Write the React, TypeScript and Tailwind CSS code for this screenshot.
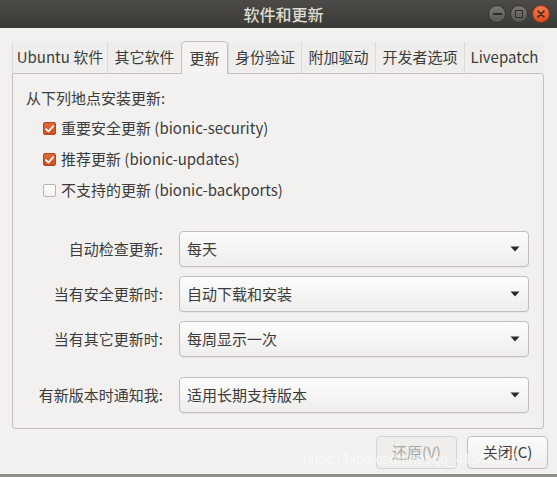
import React from "react";

const FONT = { fontFamily: '"Noto Sans CJK SC", "Noto Sans", sans-serif' };

function Check({ checked }: { checked: boolean }) {
  if (checked) {
    return (
      <span className="w-[13px] h-[13px] rounded-[2px] border border-[#b0481e] bg-gradient-to-b from-[#e4693a] to-[#cf4f21] flex items-center justify-center shrink-0">
        <svg width="9" height="8" viewBox="0 0 9 8">
          <path d="M1 4.2 L3.5 6.5 L8 1.3" stroke="#ffffff" strokeWidth="1.8" fill="none" strokeLinecap="round" strokeLinejoin="round" />
        </svg>
      </span>
    );
  }
  return <span className="w-[13px] h-[13px] rounded-[2px] border border-[#b8b5b0] bg-gradient-to-b from-[#ffffff] to-[#f2f1f0] shrink-0" />;
}

function Combo({ label, value }: { label: string; value: string }) {
  return (
    <div className="flex items-center">
      <div className="w-[151px] text-right text-[15px] text-[#3c3c3c] pr-[1px]">{label}</div>
      <div className="ml-[15px] w-[350px] h-[36px] rounded-[4px] border border-[#c2bfba] bg-gradient-to-b from-[#fcfcfc] to-[#efeeed] flex items-center justify-between pl-[7px] pr-[8px] shadow-[0_1px_0_rgba(0,0,0,0.04)]">
        <span className="text-[15px] text-[#3c3c3c]">{value}</span>
        <svg width="10" height="6" viewBox="0 0 10 6">
          <path d="M0.5 0.5 L9.5 0.5 L5 5.5 Z" fill="#2a2a2a" />
        </svg>
      </div>
    </div>
  );
}

const tabs: { label: string; w: string; active?: boolean }[] = [
  { label: "Ubuntu 软件", w: "w-[95px]" },
  { label: "其它软件", w: "w-[74px]" },
  { label: "更新", w: "w-[47px]", active: true },
  { label: "身份验证", w: "w-[73px]" },
  { label: "附加驱动", w: "w-[74px]" },
  { label: "开发者选项", w: "w-[89px]" },
  { label: "Livepatch", w: "w-[80px]" },
];

export default function App() {
  return (
    <div style={FONT} className="w-[557px] h-[477px] bg-[#f2f1f0] flex flex-col relative overflow-hidden border-b-[3px] border-[#8f8d88]">
      {/* Title bar */}
      <div className="h-[28px] shrink-0 bg-gradient-to-b from-[#4c4b47] to-[#3b3a36] relative flex items-center justify-center">
        <span className="text-[16px] font-medium text-[#dfdbd2] ml-[10px]">软件和更新</span>
        <div className="absolute right-[7px] top-[5px] flex gap-[4px]">
          <span className="w-[18px] h-[18px] rounded-full bg-gradient-to-b from-[#7a7873] to-[#5a5854] border border-[#353430] flex items-center justify-center">
            <span className="w-[9px] h-[2px] bg-[#2e2d2a]" />
          </span>
          <span className="w-[18px] h-[18px] rounded-full bg-gradient-to-b from-[#7a7873] to-[#5a5854] border border-[#353430] flex items-center justify-center">
            <span className="w-[8px] h-[8px] border-[1.5px] border-[#2e2d2a]" />
          </span>
          <span className="w-[18px] h-[18px] rounded-full bg-gradient-to-b from-[#f47a4c] to-[#de4d1c] border border-[#8c3415] flex items-center justify-center">
            <svg width="8" height="8" viewBox="0 0 8 8">
              <path d="M1 1 L7 7 M7 1 L1 7" stroke="#3a2a22" strokeWidth="1.6" strokeLinecap="round" />
            </svg>
          </span>
        </div>
      </div>

      {/* Body */}
      <div className="flex-1 flex flex-col pt-[12px] pl-[12px] pr-[13px]">
        {/* Tabs */}
        <div className="flex items-end h-[33px] relative z-10">
          {tabs.map((t) =>
            t.active ? (
              <div
                key={t.label}
                className={`${t.w} h-[33px] -mb-[1px] rounded-t-[5px] border border-b-0 border-[#c4c1bc] bg-[#f4f3f2] flex items-center justify-center text-[15px] text-[#3c3c3c]`}
              >
                {t.label}
              </div>
            ) : (
              <div
                key={t.label}
                className={`${t.w} h-[31px] border-l border-[#dcdad6] flex items-center justify-center text-[15px] text-[#3c3c3c] bg-[#efeeec]`}
              >
                {t.label}
              </div>
            )
          )}
        </div>

        {/* Panel */}
        <div className="h-[356px] border border-[#c4c1bc] rounded-b-[3px] rounded-tr-[3px] bg-[#f2f1f0] flex flex-col pt-[14px] pb-[14px]">
          <div className="pl-[13px] h-[20px] flex items-center text-[15px] text-[#3c3c3c]">从下列地点安装更新:</div>
          <div className="mt-[5px] flex flex-col pl-[30px]">
            <label className="h-[31px] flex items-center gap-[5px] text-[15px] text-[#3c3c3c]">
              <Check checked />
              <span>重要安全更新 (bionic-security)</span>
            </label>
            <label className="h-[31px] flex items-center gap-[5px] text-[15px] text-[#3c3c3c]">
              <Check checked />
              <span>推荐更新 (bionic-updates)</span>
            </label>
            <label className="h-[31px] flex items-center gap-[5px] text-[15px] text-[#3c3c3c]">
              <Check checked={false} />
              <span>不支持的更新 (bionic-backports)</span>
            </label>
          </div>
          <div className="mt-[25px] flex flex-col gap-[9px]">
            <Combo label="自动检查更新:" value="每天" />
            <Combo label="当有安全更新时:" value="自动下载和安装" />
            <Combo label="当有其它更新时:" value="每周显示一次" />
          </div>
          <div className="mt-[20px]">
            <Combo label="有新版本时通知我:" value="适用长期支持版本" />
          </div>
        </div>

        {/* Footer */}
        <div className="flex justify-end gap-[10px] mt-[7px] -mr-[4px]">
          <button className="w-[81px] h-[33px] rounded-[4px] border border-[#d6d4d0] bg-[#efeeec] text-[15px] text-[#a9a7a3]">
            还原(V)
          </button>
          <button className="w-[81px] h-[33px] rounded-[4px] border border-[#c2bfba] bg-gradient-to-b from-[#fcfcfc] to-[#efeeed] text-[15px] text-[#3c3c3c]">
            关闭(C)
          </button>
        </div>
      </div>

      {/* Watermark */}
      <div
        className="absolute left-[303px] top-[449px] text-[14px] text-white/60 pointer-events-none whitespace-nowrap"
        style={{ fontFamily: '"Liberation Sans", Arial, sans-serif' }}
      >
        https://blog.csdn.net/qq_41545537
      </div>
    </div>
  );
}
